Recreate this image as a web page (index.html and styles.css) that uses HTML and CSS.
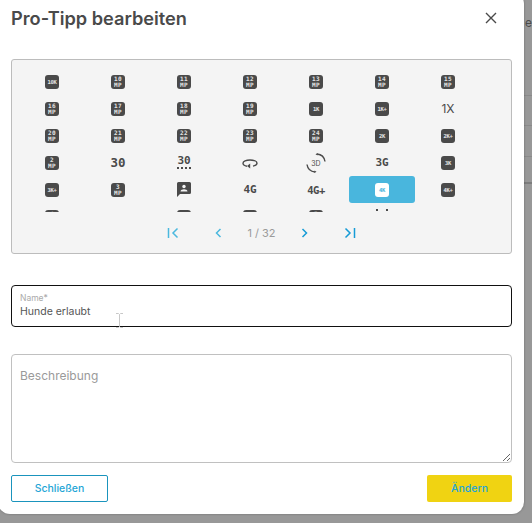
FILE: index.html
```html
<!DOCTYPE html>
<html lang="de">

<head>
  <meta charset="UTF-8" />
  <meta name="viewport" content="width=device-width, initial-scale=1.0" />
  <title>Pro-Tipp bearbeiten</title>
  <link rel="stylesheet" href="styles.css">
</head>

<body>

  <div class="backdrop">
    <span class="backdrop-text">en</span>
    <div class="backdrop-line line-1"></div>
    <div class="backdrop-line line-2"></div>
    <div class="backdrop-line line-3"></div>
    <div class="backdrop-line line-4"></div>
  </div>

  <div class="modal">
    <div class="modal-header">
      <h2>Pro-Tipp bearbeiten</h2>
      <button class="close-btn" aria-label="Schließen">
        <svg width="12" height="12" viewBox="0 0 12 12"><path d="M1 1l10 10M11 1L1 11" /></svg>
      </button>
    </div>

    <div class="picker">
      <div class="icon-grid">
        <div class="cell"><span class="ic">10K</span></div>
        <div class="cell"><span class="ic mp">10<br>MP</span></div>
        <div class="cell"><span class="ic mp">11<br>MP</span></div>
        <div class="cell"><span class="ic mp">12<br>MP</span></div>
        <div class="cell"><span class="ic mp">13<br>MP</span></div>
        <div class="cell"><span class="ic mp">14<br>MP</span></div>
        <div class="cell"><span class="ic mp">15<br>MP</span></div>

        <div class="cell"><span class="ic mp">16<br>MP</span></div>
        <div class="cell"><span class="ic mp">17<br>MP</span></div>
        <div class="cell"><span class="ic mp">18<br>MP</span></div>
        <div class="cell"><span class="ic mp">19<br>MP</span></div>
        <div class="cell"><span class="ic">1K</span></div>
        <div class="cell"><span class="ic">1K+</span></div>
        <div class="cell"><span class="plain thin">1X</span></div>

        <div class="cell"><span class="ic mp">20<br>MP</span></div>
        <div class="cell"><span class="ic mp">21<br>MP</span></div>
        <div class="cell"><span class="ic mp">22<br>MP</span></div>
        <div class="cell"><span class="ic mp">23<br>MP</span></div>
        <div class="cell"><span class="ic mp">24<br>MP</span></div>
        <div class="cell"><span class="ic">2K</span></div>
        <div class="cell"><span class="ic">2K+</span></div>

        <div class="cell"><span class="ic mp">2<br>MP</span></div>
        <div class="cell"><span class="plain wide">30</span></div>
        <div class="cell"><span class="plain fps">30</span></div>
        <div class="cell">
          <svg class="glyph" width="16" height="14" viewBox="0 0 16 14">
            <path d="M5 10.200C2.600 9.700 1 8.600 1 7.200 1 5.400 4.100 4 8 4s7 1.400 7 3.200c0 1.300-1.500 2.400-4 2.900" />
            <path class="solid" d="M8.200 7.600v5L5 10.100z" />
          </svg>
        </div>
        <div class="cell">
          <svg class="glyph rotate" width="20" height="20" viewBox="0 0 20 20">
            <path d="M11 1c4.500.4 7.400 3.600 8 7.500M9 19c-4.500-.4-7.400-3.600-8-7.500" />
            <path class="solid" d="M11.500 0v2.500L9.500 1.200zM8.500 20v-2.500l2 1.300z" />
            <text x="10" y="12.500">3D</text>
          </svg>
        </div>
        <div class="cell"><span class="plain">3G</span></div>
        <div class="cell"><span class="ic">3K</span></div>

        <div class="cell"><span class="ic">3K+</span></div>
        <div class="cell"><span class="ic mp">3<br>MP</span></div>
        <div class="cell">
          <svg class="glyph" width="14" height="15" viewBox="0 0 14 15">
            <path class="solid" d="M1.500 0h11A1.500 1.500 0 0 1 14 1.500v9a1.500 1.500 0 0 1-1.500 1.500H3l-3 3V1.500A1.500 1.500 0 0 1 1.500 0z" />
            <circle class="cut" cx="7" cy="4.500" r="1.700" />
            <path class="cut" d="M3.500 9.500c0-1.500 2-2.200 3.500-2.200s3.500.7 3.500 2.200z" />
          </svg>
        </div>
        <div class="cell"><span class="plain">4G</span></div>
        <div class="cell"><span class="plain plus">4G+</span></div>
        <div class="cell selected"><span class="ic">4K</span></div>
        <div class="cell"><span class="ic">4K+</span></div>

        <div class="cell"><span class="ic mp">4<br>MP</span></div>
        <div class="cell"></div>
        <div class="cell"><span class="ic">5K</span></div>
        <div class="cell"><span class="ic">5K+</span></div>
        <div class="cell"><span class="ic mp">5<br>MP</span></div>
        <div class="cell"><span class="dots"></span></div>
        <div class="cell"></div>
      </div>

      <div class="pager">
        <button class="page-btn light">
          <svg width="12" height="12" viewBox="0 0 12 12"><path d="M1.500 1v10M10.500 1.500L6 6l4.500 4.500" /></svg>
        </button>
        <button class="page-btn light">
          <svg width="12" height="12" viewBox="0 0 12 12"><path d="M8.500 2L4.500 6l4 4" /></svg>
        </button>
        <span class="page-num">1 / 32</span>
        <button class="page-btn">
          <svg width="12" height="12" viewBox="0 0 12 12"><path d="M3.500 2l4 4-4 4" /></svg>
        </button>
        <button class="page-btn">
          <svg width="12" height="12" viewBox="0 0 12 12"><path d="M1.500 1.500L6 6l-4.500 4.500M10.500 1v10" /></svg>
        </button>
      </div>
    </div>

    <div class="field name-field">
      <label for="name">Name*</label>
      <input id="name" type="text" value="Hunde erlaubt">
      <svg class="cursor" width="7" height="15" viewBox="0 0 7 15"><path d="M0 .5h2.500L3.500 1.500 4.500.5H7M3.500 1.500v12M0 14.500h2.500l1-1 1 1H7" /></svg>
    </div>

    <textarea class="field desc-field" placeholder="Beschreibung"></textarea>

    <div class="buttons">
      <button class="close-link">Schließen</button>
      <button class="save-btn">Ändern</button>
    </div>
  </div>

</body>

</html>
```

FILE: styles.css
```css
html,
body {
  margin: 0;
  padding: 0;
  height: 100%;
  overflow: hidden;
}

body {
  font-family: 'Inter', sans-serif;
  background: #989898;
  position: relative;
}

.backdrop-text {
  position: absolute;
  left: 525px;
  top: 15px;
  font-size: 12px;
  color: #4a4a4a;
}

.backdrop-line {
  position: absolute;
  left: 500px;
  right: 0;
  height: 1px;
  background: #8a8a8a;
}

.line-1 { top: 95px; }
.line-2 { top: 125px; }
.line-3 { top: 156px; }
.line-4 { top: 182px; height: 2px; background: #7d7d7d; }

.modal {
  position: absolute;
  left: -2px;
  top: -8px;
  width: 526px;
  height: 522px;
  box-sizing: border-box;
  padding: 8px 12px 12px 13px;
  background: #fff;
  border-radius: 12px;
  box-shadow: 0 0 3px -1px rgba(0, 0, 0, 0.7);
  display: flex;
  flex-direction: column;
}

.modal-header {
  display: flex;
  justify-content: space-between;
  align-items: center;
  height: 34px;
  margin-bottom: 25px;
}

.modal-header h2 {
  margin: 2px 0 0;
  font-size: 18.200px;
  font-weight: 600;
  color: #4a4a4a;
}

.close-btn {
  background: none;
  border: none;
  padding: 0;
  margin-right: 15px;
  margin-top: 2px;
  width: 12px;
  height: 12px;
  display: flex;
}

.close-btn path {
  fill: none;
  stroke: #4a4a4a;
  stroke-width: 1.400;
}

.picker {
  height: 195px;
  box-sizing: border-box;
  background: #f4f4f4;
  border: 1px solid #bcbcbc;
  border-radius: 3px;
  padding: 8px 30px 0 7px;
}

.icon-grid {
  display: grid;
  grid-template-columns: repeat(7, 66px);
  grid-auto-rows: 27px;
  height: 144px;
  overflow: hidden;
}

.cell {
  display: flex;
  align-items: center;
  justify-content: center;
  border-radius: 3px;
}

.cell.selected {
  background: #49b6dd;
}

.ic {
  width: 14px;
  height: 14px;
  background: #4a4a4a;
  border-radius: 3px;
  color: #e4e4e4;
  font-family: 'DejaVu Sans Mono', monospace;
  font-size: 5.500px;
  font-weight: 700;
  line-height: 14px;
  text-align: center;
  letter-spacing: -0.3px;
  overflow: hidden;
}

.ic.mp {
  font-size: 6px;
  line-height: 6px;
  padding-top: 1px;
  height: 13px;
  letter-spacing: 0.3px;
}

.selected .ic {
  background: #fff;
  color: #49b6dd;
}

.plain {
  color: #4a4a4a;
  font-family: 'DejaVu Sans Mono', monospace;
  font-size: 11px;
  font-weight: 700;
}

.plain.wide {
  font-size: 12.500px;
}

.plain.plus {
  font-size: 10.500px;
  letter-spacing: -0.5px;
}

.plain.thin {
  font-family: 'Inter', sans-serif;
  font-weight: 400;
  font-size: 12px;
}

.plain.fps {
  font-size: 11px;
  line-height: 10px;
  padding-bottom: 1px;
  border-bottom: 2px dotted #4a4a4a;
}

.dots {
  align-self: flex-start;
  margin-top: 6px;
  width: 12px;
  height: 14px;
  background:
    radial-gradient(circle at 1px 1px, #4a4a4a 1px, transparent 1.100px),
    radial-gradient(circle at 11px 1px, #4a4a4a 1px, transparent 1.100px);
}

.glyph path {
  fill: none;
  stroke: #4a4a4a;
  stroke-width: 1.400;
}

.glyph .solid {
  fill: #4a4a4a;
  stroke: none;
}

.glyph .cut {
  fill: #f4f4f4;
  stroke: none;
}

.glyph text {
  font-size: 7px;
  fill: #4a4a4a;
  text-anchor: middle;
}

.pager {
  display: flex;
  align-items: center;
  justify-content: center;
  height: 41px;
  margin-left: 23px;
}

.page-btn {
  background: none;
  border: none;
  padding: 0;
  width: 45px;
  height: 14px;
  display: flex;
  align-items: center;
  justify-content: center;
}

.page-btn path {
  fill: none;
  stroke: #159bd6;
  stroke-width: 1.500;
}

.page-btn.light path {
  stroke: #4ab8de;
}

.page-num {
  font-size: 11px;
  color: #9a9a9a;
  width: 42px;
  text-align: center;
}

.field {
  box-sizing: border-box;
  width: 501px;
  font-family: 'Inter', sans-serif;
  border-radius: 4px;
  background: #fff;
}

.name-field {
  position: relative;
  height: 42px;
  margin-top: 31px;
  border: 1px solid #111;
  padding: 7px 8px;
}

.name-field label {
  display: block;
  font-size: 8.500px;
  line-height: 10px;
  color: #aaa;
}

.name-field input {
  display: block;
  border: none;
  outline: none;
  padding: 0;
  margin-top: 1px;
  width: 100%;
  height: 14px;
  font-family: 'Inter', sans-serif;
  font-size: 10.500px;
  color: #555;
}

.cursor {
  position: absolute;
  left: 104px;
  top: 27px;
}

.cursor path {
  fill: none;
  stroke: #c8c8c8;
  stroke-width: 1;
}

.desc-field {
  display: block;
  height: 109px;
  margin-top: 27px;
  border: 1px solid #c0c0c0;
  padding: 13px 8px;
  font-size: 12px;
  color: #555;
  resize: vertical;
  outline: none;
}

.desc-field::placeholder {
  color: #9a9a9a;
}

.buttons {
  display: flex;
  justify-content: space-between;
  width: 501px;
  margin-top: 12px;
}

.close-link,
.save-btn {
  height: 27px;
  font-family: 'Inter', sans-serif;
  font-size: 10.500px;
  font-weight: 500;
  color: #1fa6d6;
  border-radius: 2px;
}

.close-link {
  width: 97px;
  background: #fff;
  border: 1px solid #1a94bd;
}

.save-btn {
  width: 85px;
  background: #f0d312;
  border: none;
}
```
